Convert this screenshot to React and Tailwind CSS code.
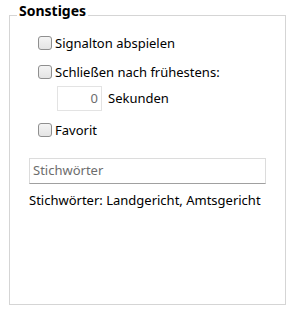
import React from "react";

function Check({ label }) {
  return (
    <div className="flex items-center h-[14px]">
      <div className="w-[14px] h-[14px] rounded-[3px] border border-[#8f8f8f] bg-gradient-to-b from-[#f4f4f4] to-[#e4e4e4] shrink-0" />
      <span className="ml-[3px] text-[13px] leading-none text-black">{label}</span>
    </div>
  );
}

export default function App() {
  return (
    <div className="w-[296px] h-[312px] bg-white relative" style={{ fontFamily: '"Noto Sans", "Open Sans", sans-serif' }}>
      <div className="absolute left-[9px] top-[12px] w-[277px] h-[290px] border border-[#d5d5d5]" />
      <div className="relative mt-[3px] ml-[17px] h-[16px] flex">
        <span className="bg-white px-[2px] text-[14px] font-bold leading-[16px] text-black">Sonstiges</span>
      </div>
      <div className="relative pl-[38px] pt-[17px] flex flex-col">
        <Check label="Signalton abspielen" />
        <div className="h-[15px]" />
        <Check label="Schließen nach frühestens:" />
        <div className="flex items-center mt-[7px] ml-[19px]">
          <div className="w-[45px] h-[25px] border border-[#e3e3e3] flex items-center justify-end pr-[3px] text-[13px] text-[#6d6d6d]">0</div>
          <span className="ml-[6px] text-[13px] text-black">Sekunden</span>
        </div>
        <div className="h-[12px]" />
        <Check label="Favorit" />
      </div>
      <div className="relative ml-[29px] mt-[21px] w-[237px] h-[26px] border border-[#dcdcdc] border-b-[#a0a0a0] flex items-center pl-[3px] text-[13px] text-[#6d6d6d]">
        Stichwörter
      </div>
      <div className="relative ml-[29px] mt-[7px] text-[13px] text-black">Stichwörter: Landgericht, Amtsgericht</div>
    </div>
  );
}
